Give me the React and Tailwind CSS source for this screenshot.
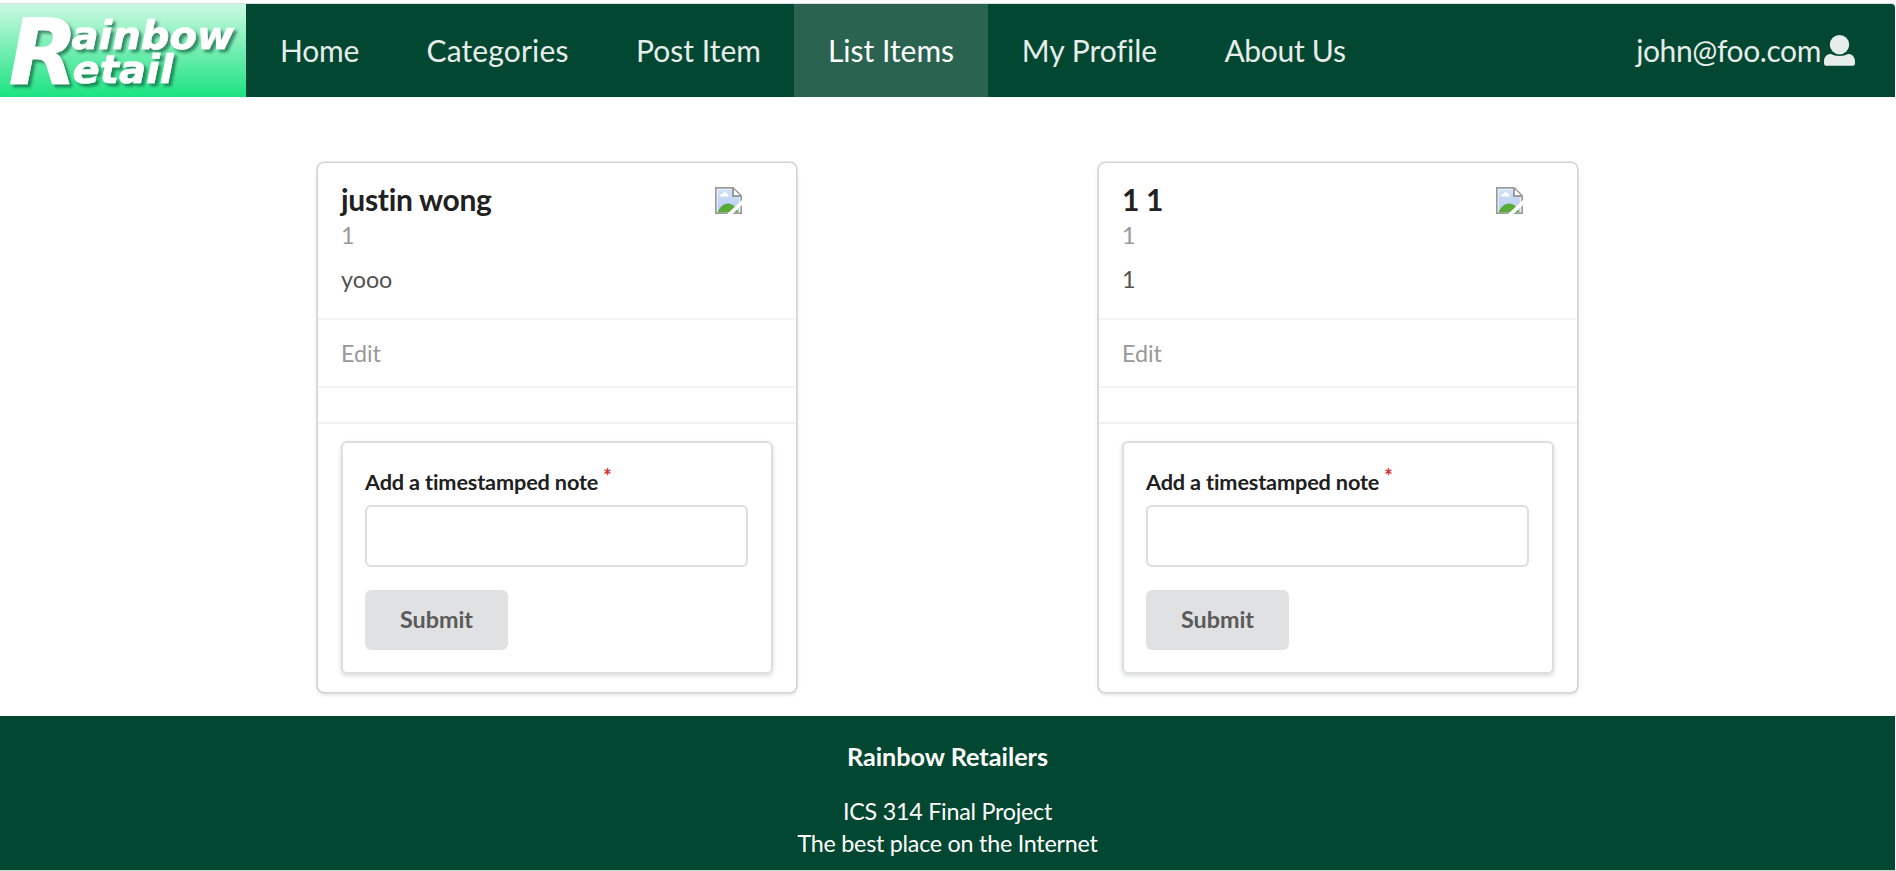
const navItems = [
  { label: 'Home', style: 'w-[147px] tracking-[-0.2px]' },
  { label: 'Categories', style: 'w-[210px] tracking-[0.15px] pr-[1px]' },
  { label: 'Post Item', style: 'w-[191px]' },
  { label: 'List Items', style: 'w-[194px]', active: true },
  { label: 'My Profile', style: 'w-[203px]' },
  { label: 'About Us', style: 'w-[188px] tracking-[-0.3px]' },
];

const contacts = [
  { name: 'justin wong', address: '1', description: 'yooo' },
  { name: '1 1', address: '1', description: '1' },
];

function Logo() {
  return (
    <svg
      className="h-[93px] w-[246px] shrink-0"
      viewBox="0 4 246 93"
      fontFamily="DejaVu Sans"
      fontWeight="bold"
      fontStyle="italic"
    >
      <defs>
        <linearGradient id="logo-bg" x1="0" y1="0" x2="0" y2="1">
          <stop offset="0" stopColor="#cbf9e2" />
          <stop offset="1" stopColor="#1be381" />
        </linearGradient>
        <filter id="logo-shadow" x="-10%" y="-10%" width="120%" height="130%">
          <feDropShadow dx="3" dy="3" stdDeviation="1.7" floodColor="#064a2a" floodOpacity="0.6" />
        </filter>
      </defs>
      <rect y="4" width="246" height="93" fill="url(#logo-bg)" />
      <g fill="#fff" stroke="#fff" strokeWidth="0.6" filter="url(#logo-shadow)">
        <text x="8.500" y="83.500" fontSize="90">R</text>
        <text x="71.500" y="48.500" fontSize="39" textLength="162.500" lengthAdjust="spacingAndGlyphs">ainbow</text>
        <text x="72.500" y="82.500" fontSize="39" textLength="101" lengthAdjust="spacingAndGlyphs">etail</text>
      </g>
    </svg>
  );
}

function UserIcon() {
  return (
    <svg className="h-[31px] w-[31px]" viewBox="0 0 31 31" fill="currentColor">
      <circle cx="15.5" cy="9.7" r="9.7" />
      <path d="M0 28V26.5C0 21.5 3 19 7 19C9.500 20.200 12 20.900 15.500 20.900S21.500 20.200 24 19C28 19 31 21.500 31 26.500V28C31 30 30 30.800 28 30.800H3C1 30.800 0 30 0 28Z" />
    </svg>
  );
}

function BrokenImage() {
  return (
    <svg className="h-[27px] w-[27px]" viewBox="0 0 27 27">
      <defs>
        <linearGradient id="sky" x1="0" y1="0" x2="0" y2="1">
          <stop offset="0" stopColor="#d2e0fa" />
          <stop offset="1" stopColor="#b6cbf0" />
        </linearGradient>
      </defs>
      <path d="M0 0H18.500L27 8.500V27H0Z" fill="#9a9a9a" />
      <path d="M1.700 1.700H17V10H25.300V25.300H1.700Z" fill="#fff" />
      <path d="M2.600 2.600H17V10H24.400V24.400H2.600Z" fill="url(#sky)" />
      <path d="M19 2.500V8H24.500Z" fill="#fff" />
      <path d="M5 9.500C4.500 7.500 6.500 6.700 7.500 7C8 4.500 11.500 4.500 12 7C14 7 14 9.500 13 9.500Z" fill="#fff" />
      <path d="M2.600 25.300C5 19.500 9 16.500 13 16.500C18 16.500 21 20 23.500 25.300Z" fill="#58ab38" />
      <path d="M12 27L27 13V18L17.500 27Z" fill="#fff" />
    </svg>
  );
}

function ContactCard({ name, address, description }) {
  return (
    <article className="flex h-[529px] w-[478px] flex-col rounded-[6px] bg-white shadow-[0_2px_5px_#d4d4d5,0_0_0_1.6px_#d4d4d5]">
      <div className="flex h-[157px] justify-between border-b-2 border-[#f4f4f4] pl-[23px] pr-[54px] pt-[18px]">
        <div>
          <h2 className="mb-[2px] text-[30px] font-bold leading-[36px] tracking-[-0.3px] text-[#212121]">{name}</h2>
          <p className="text-[23.300px] leading-[33px] text-[#999]">{address}</p>
          <p className="mt-[11px] text-[23.300px] leading-[33px] text-[#515151]">{description}</p>
        </div>
        <div className="pt-[6px]">
          <BrokenImage />
        </div>
      </div>
      <div className="flex h-[68px] items-center border-b-2 border-[#f3f3f3] pl-[23px] text-[23.300px] text-[#999]">
        <a href="#edit">Edit</a>
      </div>
      <div className="h-[36px] border-b-2 border-[#f1f1f1]" />
      <div className="px-[23px] pt-[17px]">
        <form className="h-[233px] rounded-[6px] border-2 border-[#dddede] px-[22px] pt-[24px] shadow-[0_2px_4px_rgba(34,36,38,0.16)]">
          <label className="block h-[38px] text-[21.700px] font-bold leading-[30px] tracking-[-0.15px] text-[#202020]">
            Add a timestamped note
            <span className="relative -top-[6px] ml-[5px] text-[20px] leading-none text-[#db2828]">*</span>
          </label>
          <input className="block h-[62px] w-[383px] rounded-[6px] border-2 border-[#dddede] bg-white px-5 text-[23px]" />
          <button
            type="button"
            className="mt-[23px] h-[60px] w-[143px] rounded-[6px] bg-[#e0e1e2] pb-[2px] text-[23.300px] font-bold text-[#5a5a5a]"
          >
            Submit
          </button>
        </form>
      </div>
    </article>
  );
}

export default function App() {
  return (
    <div className="flex h-[871px] w-[1896px] flex-col overflow-hidden bg-white pt-[3px] font-['Lato',sans-serif] [font-variant-ligatures:none]">
      <nav className="flex h-[94px] w-[1895px] shrink-0 rounded-tr-[4px] border-t border-[#d8dedb] bg-[#024731] text-[30px] text-[#e6edea]">
        <Logo />
        {navItems.map((item) => (
          <a
            key={item.label}
            href="#nav"
            className={`${item.style} flex shrink-0 items-center justify-center ${item.active ? 'bg-[#2a6350] text-white' : ''}`}
          >
            {item.label}
          </a>
        ))}
        <div className="ml-auto flex items-center pr-[40px]">
          <span className="mr-[3px] tracking-[-0.4px]">john@foo.com</span>
          <UserIcon />
        </div>
      </nav>
      <main className="flex h-[619px] shrink-0 gap-[303px] pl-[318px] pt-[66px]">
        {contacts.map((contact) => (
          <ContactCard key={contact.name} {...contact} />
        ))}
      </main>
      <footer className="h-[154px] w-[1895px] shrink-0 bg-[#024731] pt-[23px] text-center text-[23.300px] leading-[32px] tracking-[-0.25px] text-white">
        <h3 className="text-[25.200px] font-bold leading-[34px] tracking-normal">Rainbow Retailers</h3>
        <p className="mt-[22px]">ICS 314 Final Project</p>
        <p>The best place on the Internet</p>
      </footer>
      <div className="h-px bg-[#cdd5d2]" />
    </div>
  );
}
